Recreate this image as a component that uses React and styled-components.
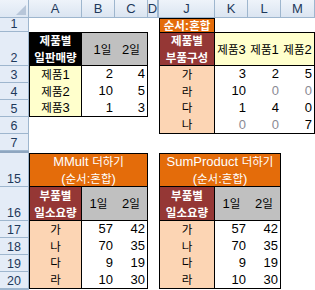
import React from 'react';
import styled, { createGlobalStyle } from 'styled-components';

const GlobalStyle = createGlobalStyle`
  html, body { margin: 0; padding: 0; background: #fff; }
  body {
    font-family: "Liberation Sans", "Noto Sans CJK KR", sans-serif;
    font-size: 13px;
    color: #000;
  }
`;

const Sheet = styled.div`
  width: 315px;
  height: 290px;
  overflow: hidden;
  display: grid;
  grid-template-columns: 29px 53px 33px 33px 11px 56px 33px 33px 1fr;
  grid-template-rows: 18px 14px 34px repeat(5, 17px) 2px 34px 34px repeat(4, 17px) 1fr;
`;

const Corner = styled.div`
  grid-column: 1;
  grid-row: 1;
  background: linear-gradient(#eef3fa, #dde7f3);
  border-right: 1px solid #9eb6ce;
  border-bottom: 1px solid #9eb6ce;
  display: flex;
  align-items: flex-end;
  justify-content: flex-end;
  padding: 0 2px 2px 0;
`;

const ColHead = styled.div`
  grid-row: 1;
  grid-column: ${p => p.$col};
  background: linear-gradient(#eef3fa, #dbe5f1);
  border-right: ${p => (p.$thick ? 2 : 1)}px solid #9eb6ce;
  border-bottom: 1px solid #9eb6ce;
  color: #1e395b;
  font-size: 13px;
  display: flex;
  align-items: center;
  justify-content: center;
  overflow: hidden;
`;

const RowHead = styled.div`
  grid-column: 1;
  grid-row: ${p => p.$row};
  background: #e4ecf7;
  border-right: 1px solid #9eb6ce;
  border-bottom: 1px solid #9eb6ce;
  color: #1e395b;
  font-size: 12.5px;
  line-height: 13px;
  display: flex;
  align-items: flex-end;
  justify-content: center;
  overflow: hidden;
`;

const HiddenRows = styled.div`
  grid-column: 1;
  grid-row: 9;
  background: #8ea6c0;
`;

const Table = styled.div`
  grid-column: ${p => p.$col};
  grid-row: ${p => p.$row};
  display: grid;
  grid-template-columns: ${p => p.$cols};
  grid-template-rows: ${p => p.$rows};
  border: 1px solid #000;
  border-bottom: ${p => (p.$open ? 'none' : '1px solid #000')};
  box-sizing: border-box;
  overflow: ${p => (p.$open ? 'visible' : 'hidden')};
`;

const Cell = styled.div`
  grid-column: ${p => p.$span || 'auto'};
  background: ${p => p.$bg || '#fff'};
  color: ${p => p.$fg || '#000'};
  font-weight: ${p => (p.$bold ? 700 : 400)};
  border-right: ${p => (p.$br ? '1px solid #000' : 'none')};
  border-bottom: ${p => (p.$bb ? '1px solid #000' : 'none')};
  display: flex;
  align-items: center;
  justify-content: ${p => p.$align || 'center'};
  padding: 0 ${p => (p.$align === 'flex-end' ? '2px' : '0')} 0 ${p => p.$pl || 0}px;
  text-align: center;
  line-height: ${p => p.$lh || 16}px;
  white-space: nowrap;
  overflow: ${p => (p.$lh ? 'visible' : 'hidden')};
`;

const Ko = styled.span`
  font-family: "Noto Sans CJK KR", sans-serif;
  font-size: 11.5px;
`;

const Lines = styled.div`
  display: flex;
  flex-direction: column;
  align-items: center;
`;

const Text = ({ children }) => (
  <Lines>
    {String(children).split('\n').map((line, i) => (
      <div key={i}>
        {line.split(/([가-힣]+)/).map((part, j) =>
          /[가-힣]/.test(part) ? <Ko key={j}>{part}</Ko> : part
        )}
      </div>
    ))}
  </Lines>
);

const BLACK = '#000';
const RED = '#953735';
const ORANGE = '#e46c0a';
const PEACH = '#fcd5b4';
const CREAM = '#ffffcc';
const GREY = '#c0c0c0';
const MUTED = '#8a8a94';

const columns = [
  { col: 2, name: 'A' },
  { col: 3, name: 'B' },
  { col: 4, name: 'C' },
  { col: 5, name: 'D', thick: true },
  { col: 6, name: 'J' },
  { col: 7, name: 'K' },
  { col: 8, name: 'L' },
  { col: 9, name: 'M' },
];

// [label, grid row]; row 21 only shows its top edge
const rows = [
  [1, 2], [2, 3], [3, 4], [4, 5], [5, 6], [6, 7], [7, 8],
  [15, 10], [16, 11], [17, 12], [18, 13], [19, 14], [20, 15], ['', 16],
];

const sales = [['제품1', 2, 4], ['제품2', 10, 5], ['제품3', 1, 3]];

const parts = [
  ['가', [3, false], [2, false], [5, false]],
  ['라', [10, false], [0, true], [0, true]],
  ['다', [1, false], [4, false], [0, false]],
  ['나', [0, true], [0, true], [7, false]],
];

const usage = [['가', 57, 42], ['나', 70, 35], ['다', 9, 19], ['라', 10, 30]];

function UsageTable({ col, cols, title }) {
  return (
    <Table $col={col} $row="10 / 16" $cols={cols} $rows="33px 34px repeat(4, 1fr)">
      <Cell $span="1 / -1" $bg={ORANGE} $fg="#fff" $bb>
        <Text>{title + '\n(순서:혼합)'}</Text>
      </Cell>
      <Cell $bg={RED} $fg="#fff" $bold $br $bb><Text>{'부품별\n일소요량'}</Text></Cell>
      <Cell $bg={GREY} $bb><Text>1일</Text></Cell>
      <Cell $bg={GREY} $bb><Text>2일</Text></Cell>
      {usage.map(([label, d1, d2]) => (
        <React.Fragment key={label}>
          <Cell $bg={PEACH} $br><Text>{label}</Text></Cell>
          <Cell $align="flex-end">{d1}</Cell>
          <Cell $align="flex-end">{d2}</Cell>
        </React.Fragment>
      ))}
    </Table>
  );
}

export default function App() {
  return (
    <>
      <GlobalStyle />
      <Sheet>
        <Corner>
          <svg width="10" height="10" viewBox="0 0 10 10">
            <polygon points="10,0 10,10 0,10" fill="#b7c6d9" />
          </svg>
        </Corner>
        {columns.map(c => (
          <ColHead key={c.name} $col={c.col} $thick={c.thick}>{c.name}</ColHead>
        ))}
        {rows.map(([n, r]) => (
          <RowHead key={r} $row={r}>{n}</RowHead>
        ))}
        <HiddenRows />

        {/* 제품별 일판매량 */}
        <Table $col="2 / 5" $row="3 / 7" $cols="52px 33px 1fr" $rows="33px repeat(3, 1fr)">
          <Cell $bg={BLACK} $fg="#fff" $bold $br $bb><Text>{'제품별\n일판매량'}</Text></Cell>
          <Cell $bg={GREY} $bb $pl={8}><Text>1일</Text></Cell>
          <Cell $bg={GREY} $bb><Text>2일</Text></Cell>
          {sales.map(([label, d1, d2]) => (
            <React.Fragment key={label}>
              <Cell $bg={CREAM} $br><Text>{label}</Text></Cell>
              <Cell $align="flex-end">{d1}</Cell>
              <Cell $align="flex-end">{d2}</Cell>
            </React.Fragment>
          ))}
        </Table>

        {/* 제품별 부품구성 */}
        <Table $col="6 / 7" $row="2 / 3" $cols="1fr" $rows="1fr" $open>
          <Cell $bg={ORANGE} $fg="#fff" $bold $lh={12}><Text>순서:혼합</Text></Cell>
        </Table>
        <Table $col="6 / 10" $row="3 / 8" $cols="55px 33px 33px 1fr" $rows="33px repeat(4, 1fr)">
          <Cell $bg={RED} $fg="#fff" $bold $br $bb><Text>{'제품별\n부품구성'}</Text></Cell>
          <Cell $bg={CREAM} $bb><Text>제품3</Text></Cell>
          <Cell $bg={CREAM} $bb><Text>제품1</Text></Cell>
          <Cell $bg={CREAM} $bb><Text>제품2</Text></Cell>
          {parts.map(([label, ...vals]) => (
            <React.Fragment key={label}>
              <Cell $bg={PEACH} $br><Text>{label}</Text></Cell>
              {vals.map(([v, muted], i) => (
                <Cell key={i} $align="flex-end" $fg={muted ? MUTED : '#000'}>{v}</Cell>
              ))}
            </React.Fragment>
          ))}
        </Table>

        <UsageTable col="2 / 5" cols="52px 33px 1fr" title="MMult 더하기" />
        <UsageTable col="6 / 9" cols="55px 33px 1fr" title="SumProduct 더하기" />
      </Sheet>
    </>
  );
}
